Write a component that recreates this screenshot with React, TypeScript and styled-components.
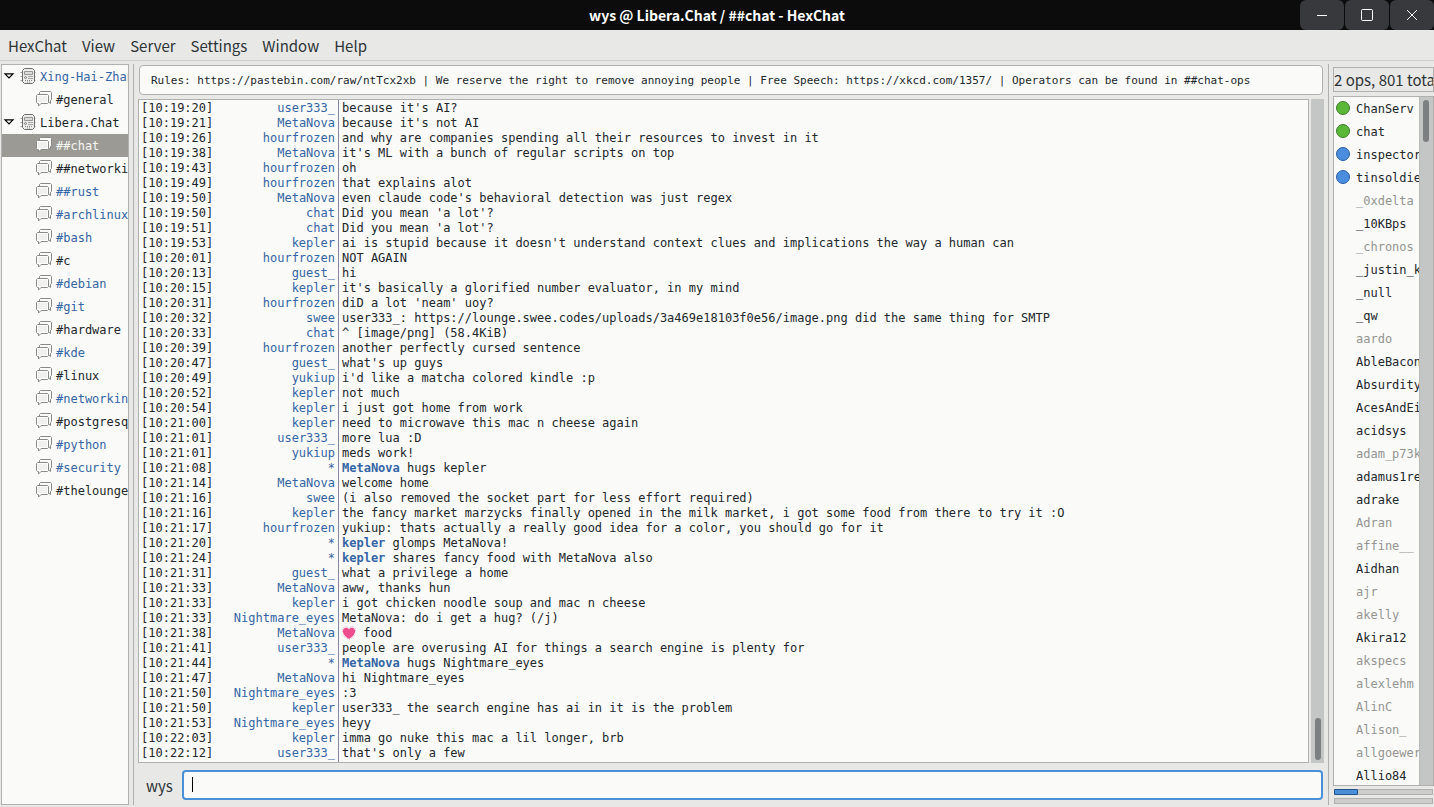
import React, { useState } from "react";
import styled, { createGlobalStyle, css } from "styled-components";

const UI_FONT = `"Noto Sans CJK SC", "Noto Sans", sans-serif`;
const MONO_FONT = `"DejaVu Sans Mono", "Liberation Mono", monospace`;

const color = {
  window: "#e8e8e6",
  base: "#fafaf8",
  border: "#b0b1ae",
  trough: "#c4c6c5",
  thumb: "#7c8080",
  text: "#2e3436",
  ink: "#22272b",
  link: "#3465a4",
  away: "#949592",
  selected: "#9b9a94",
  accent: "#4a90d9",
};

const GlobalStyle = createGlobalStyle`
  *, *::before, *::after { box-sizing: border-box; }
  body {
    margin: 0;
    background: ${color.window};
    color: ${color.text};
    font-family: ${UI_FONT};
    font-size: 15px;
  }
  button, input { font: inherit; color: inherit; }
`;

const Window = styled.div`
  display: flex;
  flex-direction: column;
  height: 100vh;
  overflow: hidden;
`;

const TitleBar = styled.header`
  display: grid;
  grid-template-columns: 134px 1fr 134px;
  height: 30px;
  flex: none;
  background: #0c0c0c;
`;

const Title = styled.h1`
  grid-column: 2;
  margin: 0;
  text-align: center;
  font-size: 14px;
  line-height: 30px;
  font-weight: 700;
  color: #fff;
`;

const WindowButtons = styled.div`
  display: flex;
  gap: 1px;
`;

const WindowButton = styled.button`
  flex: 1;
  display: flex;
  align-items: center;
  justify-content: center;
  padding: 0;
  border: 0;
  border-radius: 6px;
  background: #38393d;
  color: #fff;
`;

const MenuBar = styled.nav`
  display: flex;
  flex: none;
  height: 31px;
  border-bottom: 1px solid #cfcfcd;
`;

const MenuItem = styled.button`
  padding: 2px 7px 0 8px;
  border: 0;
  background: none;
  line-height: 28px;
`;

const Body = styled.div`
  display: flex;
  flex: 1;
  min-height: 0;
  padding-left: 1px;
`;

const TreePane = styled.aside`
  flex: none;
  width: 128px;
  margin: 3px 0 2px;
  border: 1px solid ${color.border};
  background: ${color.base};
  overflow: hidden;
`;

const Plain = styled.ul`
  list-style: none;
  margin: 0;
  padding: 0;
`;

type Tone = "normal" | "unread" | "away";

const toneColor = (tone?: Tone) =>
  tone === "unread" ? color.link : tone === "away" ? color.away : color.ink;

const TreeRow = styled.button<{ $tone: Tone; $nested?: boolean; $selected?: boolean }>`
  display: flex;
  align-items: center;
  gap: 4px;
  width: 100%;
  height: 23px;
  padding: 0 0 0 ${(p) => (p.$nested ? 34 : 1)}px;
  border: 0;
  background: ${(p) => (p.$selected ? color.selected : "transparent")};
  color: ${(p) => (p.$selected ? "#f6f6f3" : toneColor(p.$tone))};
  font-family: ${MONO_FONT};
  font-size: 12px;
  white-space: nowrap;
  text-align: left;

  svg {
    flex: none;
    margin-bottom: 1px;
  }
`;

const Expander = styled.span`
  display: flex;
  flex: none;
  width: 13px;
`;

const Divider = styled.div`
  flex: none;
  width: 1px;
  margin: 3px 4px 2px;
  background: ${color.border};
`;

const Main = styled.main`
  display: flex;
  flex-direction: column;
  flex: 1;
  min-width: 0;
  padding: 4px 0 7px;
`;

const Topic = styled.input`
  flex: none;
  height: 30px;
  margin: 0 1px 4px;
  padding: 0 11px;
  border: 1px solid ${color.border};
  border-radius: 4px;
  background: ${color.base};
  color: ${color.ink};
  font-family: ${MONO_FONT};
  font-size: 11px;
  outline: 0;
`;

const ChatArea = styled.div`
  display: flex;
  flex: 1;
  min-height: 0;
  gap: 2px;
`;

const ChatLog = styled.div`
  flex: 1;
  min-width: 0;
  padding-top: 1px;
  border: 1px solid ${color.border};
  background: linear-gradient(#8686a0, #8686a0) 199px 0 / 1px 100% no-repeat ${color.base};
  overflow: hidden;
`;

const Line = styled.div`
  display: grid;
  grid-template-columns: 72px 122px 1fr;
  padding-left: 2px;
  height: 15px;
  line-height: 15px;
  font-family: ${MONO_FONT};
  font-size: 12px;
  color: ${color.ink};
  white-space: pre;
`;

const Nick = styled.span`
  text-align: right;
  color: ${color.link};
`;

const Message = styled.span`
  padding-left: 7px;

  b {
    color: ${color.link};
  }
  svg {
    vertical-align: -3px;
  }
`;

const Scrollbar = styled.div<{ $bottom?: boolean }>`
  display: flex;
  flex: none;
  align-items: ${(p) => (p.$bottom ? "flex-end" : "flex-start")};
  justify-content: center;
  width: 13px;
  padding: 3px 0;
  background: ${color.trough};
  ${(p) =>
    !p.$bottom &&
    css`
      width: 14px;
      padding-right: 1px;
      border-left: 1px solid #b8bab8;
    `}
`;

const Thumb = styled.div`
  width: 6px;
  height: 42px;
  border-radius: 3px;
  background: ${color.thumb};
`;

const InputRow = styled.form`
  display: flex;
  flex: none;
  align-items: center;
  gap: 9px;
  margin: 7px 1px 0 8px;
`;

const OwnNick = styled.label`
  padding-top: 2px;
  line-height: 28px;
`;

const MessageField = styled.div<{ $empty: boolean }>`
  position: relative;
  display: flex;
  flex: 1;
  min-width: 0;

  ${(p) =>
    p.$empty &&
    css`
      &::after {
        content: "";
        position: absolute;
        left: 10px;
        top: 7px;
        width: 1px;
        height: 15px;
        background: #000;
        pointer-events: none;
      }
      input {
        caret-color: transparent;
      }
    `}
`;

const MessageBox = styled.input`
  flex: 1;
  min-width: 0;
  height: 30px;
  padding: 0 8px;
  border: 2px solid ${color.accent};
  border-radius: 4px;
  background: ${color.base};
  font-family: ${MONO_FONT};
  font-size: 12px;
  outline: 0;
`;

const UserPane = styled.aside`
  display: flex;
  flex-direction: column;
  flex: none;
  width: 101px;
  padding: 6px 0 3px;
`;

const UserCount = styled.div`
  flex: none;
  height: 25px;
  margin-bottom: 4px;
  border: 1px solid ${color.border};
  line-height: 23px;
  white-space: nowrap;
  overflow: hidden;
`;

const UserBox = styled.div`
  display: flex;
  flex: 1;
  min-height: 0;
  border: 1px solid ${color.border};
  background: ${color.base};
`;

const Users = styled(Plain)`
  flex: 1;
  min-width: 0;
  overflow: hidden;
`;

const User = styled.li<{ $tone?: Tone }>`
  display: flex;
  align-items: center;
  gap: 6px;
  height: 23px;
  padding-left: 2px;
  font-family: ${MONO_FONT};
  font-size: 12px;
  color: ${(p) => toneColor(p.$tone)};
  white-space: nowrap;
`;

const Badge = styled.span<{ $kind?: "op" | "registered" }>`
  flex: none;
  width: 14px;
  height: 14px;
  margin-bottom: 1px;
  border-radius: 50%;
  ${(p) =>
    p.$kind === "op" &&
    css`
      border: 1px solid #3e7d2c;
      background: #5ab738;
    `}
  ${(p) =>
    p.$kind === "registered" &&
    css`
      border: 1px solid #2b5fa8;
      background: #4a8ddf;
    `}
`;

const Meter = styled.div`
  flex: none;
  height: 6px;
  margin: 3px 1px 0;
  border: 1px solid ${color.border};
  background: #cdcecc;
`;

const MeterFill = styled.div`
  height: 6px;
  margin: -1px;
  border: 1px solid #20528c;
  border-radius: 1px;
  background: ${color.accent};
`;

const ServerIcon = () => (
  <svg width="16" height="16" viewBox="0 0 16 16" fill="none" aria-hidden="true">
    <path d="M.5 4.500h15M.5 8.500h15M.5 12.500h15" stroke="#a5a6a3" />
    <path d="M4.500.5h8l2 2v11l-2 2h-8l-2-2v-11z" fill="#ececea" stroke="#6b6d69" />
    <path d="M4.500 3.500h8v3h-8z" fill="#dcdcda" stroke="#969894" />
    <path d="M8 8.500h5M8 10.500h5" stroke="#a5a6a3" />
    <path d="M5 12.500h1M7 12.500h1M9 12.500h1M11 12.500h1M7 14h1M9 14h1" stroke="#8b8d89" />
    <circle cx="5.500" cy="9.500" r="1" stroke="#7b7d79" />
  </svg>
);

const ChannelIcon = () => (
  <svg width="16" height="16" viewBox="0 0 16 16" fill="none" strokeLinejoin="round" aria-hidden="true">
    <path d="M4.500.5h10l1 1v7l-1 1v3l-2.500-2H4.500l-1-1v-8z" fill="#fbfbfa" stroke="#888a85" />
    <path d="M1.500 3.500h10l1 1v7l-1 1H5l-2.500 2.500v-2.500h-1l-1-1v-7z" fill="#fff" stroke="#888a85" />
    <path d="M2 5h9v6H2z" fill="#f0f0ee" />
  </svg>
);

const HeartIcon = () => (
  <svg width="14" height="14" viewBox="0 0 14 14" role="img" aria-label="beating heart">
    <path d="M.5 6C-.5 0 5-.5 7 2.500c2-3 7.500-2.500 6.500 3.500M1 8.500c1 2.500 3 3.500 6 5 3-1.500 5-2.500 6-5" fill="none" stroke="#f6a9cc" strokeDasharray="1 1" />
    <path d="M7 13C3 10.500.500 7.500 1 4.500 1.500 1 5.500 1 7 3.500 8.500 1 12.500 1 13 4.500 13.500 7.500 11 10.500 7 13z" fill="#ee4d8e" />
  </svg>
);

const menus = ["HexChat", "View", "Server", "Settings", "Window", "Help"];

type Channel = [name: string, unread?: boolean];
const networks: { name: string; unread?: boolean; channels: Channel[] }[] = [
  { name: "Xing-Hai-Zhan", unread: true, channels: [["#general"]] },
  {
    name: "Libera.Chat",
    channels: [
      ["##chat"],
      ["##networking"],
      ["##rust", true],
      ["#archlinux", true],
      ["#bash", true],
      ["#c"],
      ["#debian", true],
      ["#git", true],
      ["#hardware"],
      ["#kde", true],
      ["#linux"],
      ["#networking", true],
      ["#postgresql"],
      ["#python", true],
      ["#security", true],
      ["#thelounge"],
    ],
  },
];

const HEART = "\u2665";

/* time, nick, text; a nick of "*" marks an action whose first word is the actor */
const log: [string, string, string][] = [
  ["10:19:20", "user333_", "because it's AI?"],
  ["10:19:21", "MetaNova", "because it's not AI"],
  ["10:19:26", "hourfrozen", "and why are companies spending all their resources to invest in it"],
  ["10:19:38", "MetaNova", "it's ML with a bunch of regular scripts on top"],
  ["10:19:43", "hourfrozen", "oh"],
  ["10:19:49", "hourfrozen", "that explains alot"],
  ["10:19:50", "MetaNova", "even claude code's behavioral detection was just regex"],
  ["10:19:50", "chat", "Did you mean 'a lot'?"],
  ["10:19:51", "chat", "Did you mean 'a lot'?"],
  ["10:19:53", "kepler", "ai is stupid because it doesn't understand context clues and implications the way a human can"],
  ["10:20:01", "hourfrozen", "NOT AGAIN"],
  ["10:20:13", "guest_", "hi"],
  ["10:20:15", "kepler", "it's basically a glorified number evaluator, in my mind"],
  ["10:20:31", "hourfrozen", "diD a lot 'neam' uoy?"],
  ["10:20:32", "swee", "user333_: https://lounge.swee.codes/uploads/3a469e18103f0e56/image.png did the same thing for SMTP"],
  ["10:20:33", "chat", "^ [image/png] (58.4KiB)"],
  ["10:20:39", "hourfrozen", "another perfectly cursed sentence"],
  ["10:20:47", "guest_", "what's up guys"],
  ["10:20:49", "yukiup", "i'd like a matcha colored kindle :p"],
  ["10:20:52", "kepler", "not much"],
  ["10:20:54", "kepler", "i just got home from work"],
  ["10:21:00", "kepler", "need to microwave this mac n cheese again"],
  ["10:21:01", "user333_", "more lua :D"],
  ["10:21:01", "yukiup", "meds work!"],
  ["10:21:08", "*", "MetaNova hugs kepler"],
  ["10:21:14", "MetaNova", "welcome home"],
  ["10:21:16", "swee", "(i also removed the socket part for less effort required)"],
  ["10:21:16", "kepler", "the fancy market marzycks finally opened in the milk market, i got some food from there to try it :O"],
  ["10:21:17", "hourfrozen", "yukiup: thats actually a really good idea for a color, you should go for it"],
  ["10:21:20", "*", "kepler glomps MetaNova!"],
  ["10:21:24", "*", "kepler shares fancy food with MetaNova also"],
  ["10:21:31", "guest_", "what a privilege a home"],
  ["10:21:33", "MetaNova", "aww, thanks hun"],
  ["10:21:33", "kepler", "i got chicken noodle soup and mac n cheese"],
  ["10:21:33", "Nightmare_eyes", "MetaNova: do i get a hug? (/j)"],
  ["10:21:38", "MetaNova", HEART + " food"],
  ["10:21:41", "user333_", "people are overusing AI for things a search engine is plenty for"],
  ["10:21:44", "*", "MetaNova hugs Nightmare_eyes"],
  ["10:21:47", "MetaNova", "hi Nightmare_eyes"],
  ["10:21:50", "Nightmare_eyes", ":3"],
  ["10:21:50", "kepler", "user333_ the search engine has ai in it is the problem"],
  ["10:21:53", "Nightmare_eyes", "heyy"],
  ["10:22:03", "kepler", "imma go nuke this mac a lil longer, brb"],
  ["10:22:12", "user333_", "that's only a few"],
];

const users: { name: string; kind?: "op" | "registered"; away?: boolean }[] = [
  { name: "ChanServ", kind: "op" },
  { name: "chat", kind: "op" },
  { name: "inspector", kind: "registered" },
  { name: "tinsoldier", kind: "registered" },
  { name: "_0xdelta", away: true },
  { name: "_10KBps" },
  { name: "_chronos", away: true },
  { name: "_justin_k" },
  { name: "_null" },
  { name: "_qw" },
  { name: "aardo", away: true },
  { name: "AbleBacon" },
  { name: "Absurdity" },
  { name: "AcesAndEi" },
  { name: "acidsys" },
  { name: "adam_p73k", away: true },
  { name: "adamus1re" },
  { name: "adrake" },
  { name: "Adran", away: true },
  { name: "affine__", away: true },
  { name: "Aidhan" },
  { name: "ajr", away: true },
  { name: "akelly", away: true },
  { name: "Akira12" },
  { name: "akspecs", away: true },
  { name: "alexlehm", away: true },
  { name: "AlinC", away: true },
  { name: "Alison_", away: true },
  { name: "allgoewer", away: true },
  { name: "Allio84" },
];

const renderText = (nick: string, text: string) => {
  if (nick === "*") {
    const cut = text.indexOf(" ");
    return (
      <>
        <b>{text.slice(0, cut)}</b>
        {text.slice(cut)}
      </>
    );
  }
  if (text.startsWith(HEART)) {
    return (
      <>
        <HeartIcon />
        {text.slice(1)}
      </>
    );
  }
  return text;
};

export default function App() {
  const [active, setActive] = useState("##chat");
  const [draft, setDraft] = useState("");

  return (
    <Window>
      <GlobalStyle />
      <TitleBar>
        <Title>wys @ Libera.Chat / ##chat - HexChat</Title>
        <WindowButtons>
          <WindowButton aria-label="Minimize">
            <svg width="12" height="12" viewBox="0 0 12 12" stroke="currentColor">
              <path d="M1 6.500h10" />
            </svg>
          </WindowButton>
          <WindowButton aria-label="Maximize">
            <svg width="12" height="12" viewBox="0 0 12 12" stroke="currentColor" fill="none">
              <rect x=".5" y=".5" width="11" height="11" rx="1" />
            </svg>
          </WindowButton>
          <WindowButton aria-label="Close">
            <svg width="12" height="12" viewBox="0 0 12 12" stroke="currentColor">
              <path d="M1 1l10 10M11 1L1 11" />
            </svg>
          </WindowButton>
        </WindowButtons>
      </TitleBar>

      <MenuBar>
        {menus.map((m) => (
          <MenuItem key={m}>{m}</MenuItem>
        ))}
      </MenuBar>

      <Body>
        <TreePane>
          <Plain>
            {networks.map((net) => (
              <li key={net.name}>
                <TreeRow $tone={net.unread ? "unread" : "normal"} onClick={() => setActive(net.name)} $selected={active === net.name}>
                  <Expander>
                    <svg width="12" height="6" viewBox="0 0 12 6">
                      <path d="M2 .8h8L6 5z" fill="#fff" stroke="#000" strokeWidth="1.200" />
                    </svg>
                  </Expander>
                  <ServerIcon />
                  {net.name}
                </TreeRow>
                <Plain>
                  {net.channels.map(([name, unread]) => (
                    <li key={name}>
                      <TreeRow
                        $nested
                        $tone={unread ? "unread" : "normal"}
                        $selected={active === name}
                        onClick={() => setActive(name)}
                      >
                        <ChannelIcon />
                        {name}
                      </TreeRow>
                    </li>
                  ))}
                </Plain>
              </li>
            ))}
          </Plain>
        </TreePane>

        <Divider />

        <Main>
          <Topic
            aria-label="Channel topic"
            defaultValue="Rules: https://pastebin.com/raw/ntTcx2xb | We reserve the right to remove annoying people | Free Speech: https://xkcd.com/1357/ | Operators can be found in ##chat-ops"
          />
          <ChatArea>
            <ChatLog role="log">
              {log.map(([time, nick, text], i) => (
                <Line key={i}>
                  <span>[{time}]</span>
                  <Nick>{nick}</Nick>
                  <Message>{renderText(nick, text)}</Message>
                </Line>
              ))}
            </ChatLog>
            <Scrollbar $bottom>
              <Thumb />
            </Scrollbar>
          </ChatArea>
          <InputRow onSubmit={(e) => e.preventDefault()}>
            <OwnNick htmlFor="message">wys</OwnNick>
            <MessageField $empty={draft === ""}>
              <MessageBox id="message" autoFocus autoComplete="off" value={draft} onChange={(e) => setDraft(e.target.value)} />
            </MessageField>
          </InputRow>
        </Main>

        <Divider />

        <UserPane>
          <UserCount>2 ops, 801 total</UserCount>
          <UserBox>
            <Users>
              {users.map((u) => (
                <User key={u.name} $tone={u.away ? "away" : "normal"}>
                  <Badge $kind={u.kind} />
                  {u.name}
                </User>
              ))}
            </Users>
            <Scrollbar>
              <Thumb />
            </Scrollbar>
          </UserBox>
          <Meter>
            <MeterFill style={{ width: "25%" }} />
          </Meter>
          <Meter />
        </UserPane>
      </Body>
    </Window>
  );
}
